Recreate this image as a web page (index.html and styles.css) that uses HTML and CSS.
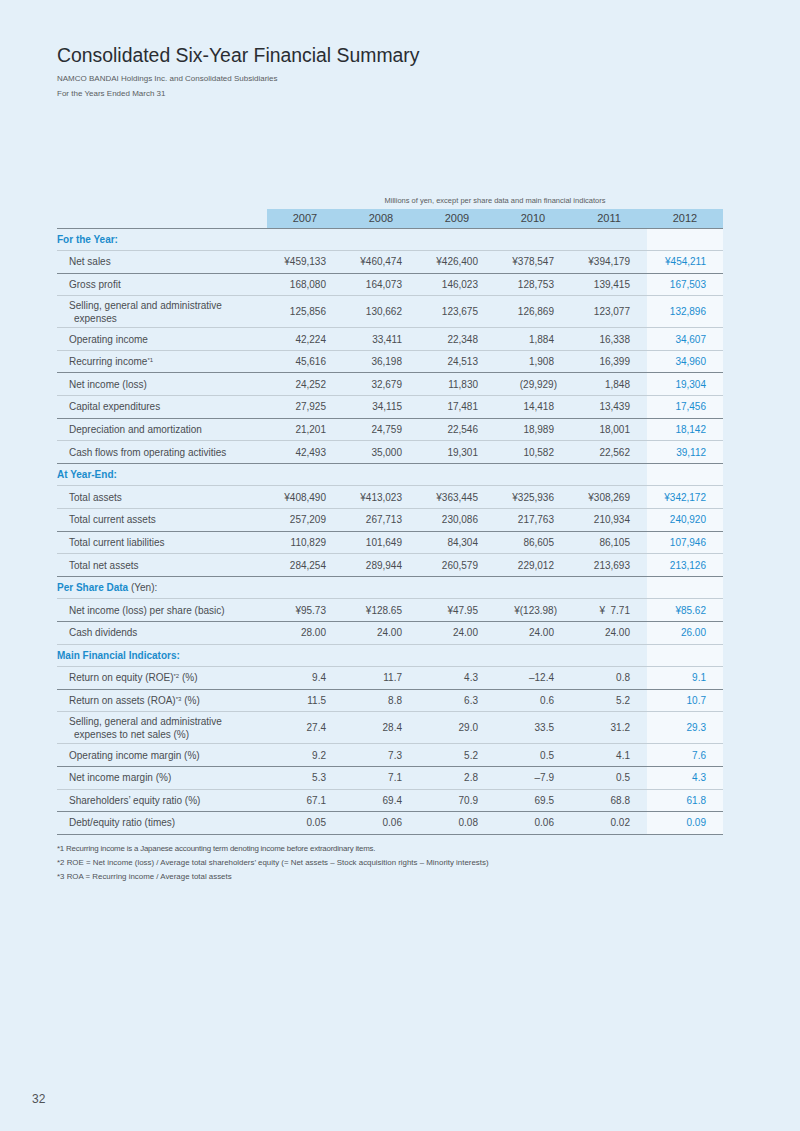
FILE: index.html
```html
<!DOCTYPE html>
<html lang="en">
<head>
    <meta charset="UTF-8">
    <meta name="viewport" content="width=device-width, initial-scale=1.0">
    <title>Consolidated Six-Year Financial Summary</title>
    <link rel="stylesheet" href="styles.css">
</head>
<body>
    <div class="page">
        <h1>Consolidated Six-Year Financial Summary</h1>
        <div class="sub">
            <p>NAMCO BANDAI Holdings Inc. and Consolidated Subsidiaries</p>
            <p>For the Years Ended March 31</p>
        </div>

        <div class="unit">Millions of yen, except per share data and main financial indicators</div>

        <table class="fin">
            <colgroup>
                <col class="c-label">
                <col><col><col><col><col><col>
            </colgroup>
            <thead>
                <tr class="head dk">
                    <th class="blank"></th>
                    <th>2007</th><th>2008</th><th>2009</th><th>2010</th><th>2011</th><th>2012</th>
                </tr>
            </thead>
            <tbody>
                <!-- For the year -->
                <tr class="section">
                    <td class="label">For the Year:</td>
                    <td></td><td></td><td></td><td></td><td></td><td class="cur"></td>
                </tr>
                <tr class="dk">
                    <td class="label">Net sales</td>
                    <td>¥459,133</td><td>¥460,474</td><td>¥426,400</td><td>¥378,547</td><td>¥394,179</td><td class="cur">¥454,211</td>
                </tr>
                <tr>
                    <td class="label">Gross profit</td>
                    <td>168,080</td><td>164,073</td><td>146,023</td><td>128,753</td><td>139,415</td><td class="cur">167,503</td>
                </tr>
                <tr class="two">
                    <td class="label">Selling, general and administrative expenses</td>
                    <td>125,856</td><td>130,662</td><td>123,675</td><td>126,869</td><td>123,077</td><td class="cur">132,896</td>
                </tr>
                <tr>
                    <td class="label">Operating income</td>
                    <td>42,224</td><td>33,411</td><td>22,348</td><td>1,884</td><td>16,338</td><td class="cur">34,607</td>
                </tr>
                <tr class="dk">
                    <td class="label">Recurring income<sup>*1</sup></td>
                    <td>45,616</td><td>36,198</td><td>24,513</td><td>1,908</td><td>16,399</td><td class="cur">34,960</td>
                </tr>
                <tr>
                    <td class="label">Net income (loss)</td>
                    <td>24,252</td><td>32,679</td><td>11,830</td><td><span class="neg">(29,929)</span></td><td>1,848</td><td class="cur">19,304</td>
                </tr>
                <tr class="dk">
                    <td class="label">Capital expenditures</td>
                    <td>27,925</td><td>34,115</td><td>17,481</td><td>14,418</td><td>13,439</td><td class="cur">17,456</td>
                </tr>
                <tr>
                    <td class="label">Depreciation and amortization</td>
                    <td>21,201</td><td>24,759</td><td>22,546</td><td>18,989</td><td>18,001</td><td class="cur">18,142</td>
                </tr>
                <tr class="dk">
                    <td class="label">Cash flows from operating activities</td>
                    <td>42,493</td><td>35,000</td><td>19,301</td><td>10,582</td><td>22,562</td><td class="cur">39,112</td>
                </tr>

                <!-- At year-end -->
                <tr class="section">
                    <td class="label">At Year-End:</td>
                    <td></td><td></td><td></td><td></td><td></td><td class="cur"></td>
                </tr>
                <tr>
                    <td class="label">Total assets</td>
                    <td>¥408,490</td><td>¥413,023</td><td>¥363,445</td><td>¥325,936</td><td>¥308,269</td><td class="cur">¥342,172</td>
                </tr>
                <tr class="dk">
                    <td class="label">Total current assets</td>
                    <td>257,209</td><td>267,713</td><td>230,086</td><td>217,763</td><td>210,934</td><td class="cur">240,920</td>
                </tr>
                <tr>
                    <td class="label">Total current liabilities</td>
                    <td>110,829</td><td>101,649</td><td>84,304</td><td>86,605</td><td>86,105</td><td class="cur">107,946</td>
                </tr>
                <tr class="dk">
                    <td class="label">Total net assets</td>
                    <td>284,254</td><td>289,944</td><td>260,579</td><td>229,012</td><td>213,693</td><td class="cur">213,126</td>
                </tr>

                <!-- Per share -->
                <tr class="section">
                    <td class="label">Per Share Data <span class="unit-note">(Yen):</span></td>
                    <td></td><td></td><td></td><td></td><td></td><td class="cur"></td>
                </tr>
                <tr class="dk">
                    <td class="label">Net income (loss) per share (basic)</td>
                    <td>¥95.73</td><td>¥128.65</td><td>¥47.95</td><td><span class="neg">¥(123.98)</span></td><td>¥&nbsp;&nbsp;7.71</td><td class="cur">¥85.62</td>
                </tr>
                <tr>
                    <td class="label">Cash dividends</td>
                    <td>28.00</td><td>24.00</td><td>24.00</td><td>24.00</td><td>24.00</td><td class="cur">26.00</td>
                </tr>

                <!-- Indicators -->
                <tr class="section">
                    <td class="label">Main Financial Indicators:</td>
                    <td></td><td></td><td></td><td></td><td></td><td class="cur"></td>
                </tr>
                <tr class="dk">
                    <td class="label">Return on equity (ROE)<sup>*2</sup> (%)</td>
                    <td>9.4</td><td>11.7</td><td>4.3</td><td>–12.4</td><td>0.8</td><td class="cur">9.1</td>
                </tr>
                <tr>
                    <td class="label">Return on assets (ROA)<sup>*3</sup> (%)</td>
                    <td>11.5</td><td>8.8</td><td>6.3</td><td>0.6</td><td>5.2</td><td class="cur">10.7</td>
                </tr>
                <tr class="two">
                    <td class="label">Selling, general and administrative expenses to net sales (%)</td>
                    <td>27.4</td><td>28.4</td><td>29.0</td><td>33.5</td><td>31.2</td><td class="cur">29.3</td>
                </tr>
                <tr class="dk">
                    <td class="label">Operating income margin (%)</td>
                    <td>9.2</td><td>7.3</td><td>5.2</td><td>0.5</td><td>4.1</td><td class="cur">7.6</td>
                </tr>
                <tr>
                    <td class="label">Net income margin (%)</td>
                    <td>5.3</td><td>7.1</td><td>2.8</td><td>–7.9</td><td>0.5</td><td class="cur">4.3</td>
                </tr>
                <tr class="dk">
                    <td class="label">Shareholders’ equity ratio (%)</td>
                    <td>67.1</td><td>69.4</td><td>70.9</td><td>69.5</td><td>68.8</td><td class="cur">61.8</td>
                </tr>
                <tr class="dk">
                    <td class="label">Debt/equity ratio (times)</td>
                    <td>0.05</td><td>0.06</td><td>0.08</td><td>0.06</td><td>0.02</td><td class="cur">0.09</td>
                </tr>
            </tbody>
        </table>

        <div class="notes">
            <p class="tight">*1 Recurring income is a Japanese accounting term denoting income before extraordinary items.</p>
            <p>*2 ROE = Net income (loss) / Average total shareholders’ equity (= Net assets – Stock acquisition rights – Minority interests)</p>
            <p>*3 ROA = Recurring income / Average total assets</p>
        </div>

        <div class="folio">32</div>
    </div>
</body>
</html>
```

FILE: styles.css
```css
body {
    margin: 0;
    background-color: #e4f0f9;
    font-family: "Liberation Sans", Arial, sans-serif;
    color: #4a4d51;
}

.page {
    box-sizing: border-box;
    min-height: 1131px;
    padding: 43px 0 25px 57px;
    display: flex;
    flex-direction: column;
}

h1 {
    margin: 0;
    font-size: 19.4px;
    line-height: 24px;
    font-weight: normal;
    color: #2a2d32;
}

.sub {
    margin-top: 4px;
}

.sub p {
    margin: 0;
    font-size: 8px;
    line-height: 15px;
    color: #5a5d61;
}

.unit {
    width: 456px;
    margin: 94px 0 2px 210px;
    font-size: 7.5px;
    line-height: 12px;
    text-align: center;
    color: #5a5d61;
}

/* Summary table */
.fin {
    width: 666px;
    table-layout: fixed;
    border-collapse: collapse;
    font-size: 10px;
}

.fin col {
    width: 76px;
}

.fin col.c-label {
    width: 210px;
}

.fin tr {
    height: 22.6px;
    border-bottom: 1px solid #c3ced6;
}

.fin tr.dk {
    border-bottom-color: #7e8a93;
}

.fin tr.two {
    height: 32px;
}

.fin tr.head {
    height: 19px;
}

.fin th {
    padding: 0;
    font-weight: normal;
    font-size: 11px;
    text-align: center;
    background-color: #a9d4ed;
    color: #404346;
}

.fin th.blank {
    background: none;
}

.fin td {
    padding: 0 17px 0 0;
    text-align: right;
    white-space: nowrap;
    line-height: 13px;
}

.fin td.label {
    padding: 0 0 0 12px;
    text-align: left;
    white-space: normal;
}

.fin tr.two td.label {
    padding-left: 17px;
    padding-right: 40px;
    text-indent: -5px;
}

.fin tr.section td.label {
    padding-left: 0;
    font-weight: bold;
    color: #1b8ccc;
    white-space: nowrap;
}

.fin .unit-note {
    font-weight: normal;
    color: #4a4d51;
}

.fin td.cur {
    background-color: #f4f9fd;
    color: #1a8dd0;
}

.fin .neg {
    margin-right: -3px;
}

sup {
    font-size: 6px;
    line-height: 0;
    vertical-align: 3px;
}

.notes {
    margin-top: 7px;
}

.notes p {
    margin: 0;
    font-size: 7.9px;
    line-height: 14px;
    color: #4f5256;
}

.notes p.tight {
    letter-spacing: -0.2px;
}

.folio {
    margin-top: auto;
    margin-left: -25px;
    font-size: 12px;
    line-height: 14px;
    color: #505357;
}
```
